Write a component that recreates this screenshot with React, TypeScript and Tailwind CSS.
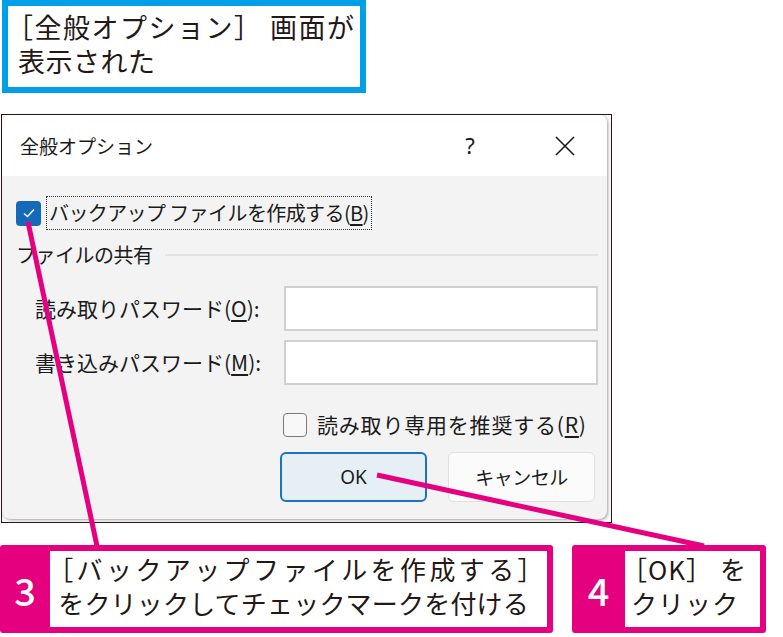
import React from "react";

const jp = { fontFamily: '"Noto Sans CJK JP", "Noto Sans", sans-serif' } as React.CSSProperties;

function U({ c }: { c: string }) {
  return <span className="underline underline-offset-[3px] decoration-[1.5px]">{c}</span>;
}

function OB({ m }: { m: string }) {
  return <span className={m}>［</span>;
}

export default function App() {
  return (
    <div
      className="relative w-[783px] h-[637px] bg-white overflow-hidden text-[#231815]"
      style={jp}
    >
      {/* top callout */}
      <div className="ml-[2px] w-[364px] h-[93px] border-[6px] border-[#00a0e9] pl-[10px] pt-[4px] text-[27px] leading-[34px]">
        <div className="tracking-[1.5px]"><OB m="ml-[-12px]" />全般オプション］ 画面が</div>
        <div className="tracking-[0.5px]">表示された</div>
      </div>

      {/* dialog screenshot */}
      <div className="mt-[21px] ml-[1px] w-[611px] h-[409px] border border-[#231815] bg-[#fafafa] flex">
        <div className="flex-1 mr-[4px] mb-[3px] rounded-[8px] overflow-hidden bg-[#f3f3f3] shadow-[1px_1px_3px_rgba(0,0,0,0.35)] flex flex-col text-[#1b1b1b]">
          {/* title bar */}
          <div className="h-[61px] bg-white flex items-center pl-[18px] text-[19px]">
            <div className="flex-1 pt-[2px]">全般オプション</div>
            <div className="w-[40px] text-center text-[22px] mr-[55px]" style={{ fontFamily: '"Noto Sans", sans-serif' }}>?</div>
            <div className="w-[40px] flex justify-center mr-[22px]">
              <svg width="22" height="22" viewBox="0 0 22 22">
                <path d="M2 2 L20 20 M20 2 L2 20" stroke="#1b1b1b" strokeWidth="1.6" fill="none" />
              </svg>
            </div>
          </div>
          {/* body */}
          <div className="flex-1 flex flex-col pt-[20px] pl-[14px] pr-[9px] text-[20px]">
            <div className="h-[34px] flex items-center">
              <div className="w-[25px] h-[25px] rounded-[4px] bg-[#1469b9] flex items-center justify-center">
                <svg width="14" height="12" viewBox="0 0 14 12">
                  <path d="M2 6.5 L5.5 9.5 L12 2.5" stroke="white" strokeWidth="1.4" fill="none" />
                </svg>
              </div>
              <div className="ml-[5px] h-[34px] flex items-center px-[2px] border border-dotted border-[#333] tracking-[-0.6px]">
                バックアップ ファイルを作成する(<U c="B" />)
              </div>
            </div>
            <div className="mt-[13px] h-[24px] flex items-center">
              <span className="tracking-[-0.5px]">ファイルの共有</span>
              <div className="flex-1 ml-[12px] h-[2px] bg-[#e4e4e4]" />
            </div>
            <div className="mt-[19px] flex items-center text-[21px]">
              <div className="flex-1 pl-[19px]">
                読み取りパスワード(<U c="O" />):
              </div>
              <div className="w-[314px] h-[45px] bg-white border-2 border-[#d0d0d0]" />
            </div>
            <div className="mt-[9px] flex items-center text-[21px]">
              <div className="flex-1 pl-[19px]">
                書き込みパスワード(<U c="M" />):
              </div>
              <div className="w-[314px] h-[45px] bg-white border-2 border-[#d0d0d0]" />
            </div>
            <div className="mt-[28px] flex items-center pl-[267px] h-[24px] text-[21px]">
              <div className="w-[24px] h-[24px] rounded-[4px] border-[1.5px] border-[#7a7a7a] bg-[#f8f8f8]" />
              <div className="ml-[10px] tracking-[0.8px]">
                読み取り専用を推奨する(<U c="R" />)
              </div>
            </div>
            <div className="mt-[15px] flex justify-end gap-[21px] pr-[3px] text-[19px]">
              <div className="w-[147px] h-[50px] rounded-[6px] border-2 border-[#1a73c5] bg-[#e6eef6] flex items-center justify-center" style={{ fontFamily: '"Noto Sans", sans-serif' }}>
                OK
              </div>
              <div className="w-[147px] h-[50px] rounded-[6px] border border-[#e0e0e0] bg-[#fbfbfb] flex items-center justify-center tracking-[-0.5px]">
                キャンセル
              </div>
            </div>
          </div>
        </div>
      </div>

      {/* bottom callouts */}
      <div className="mt-[22px] flex h-[88px]">
        <div className="w-[553px] h-full bg-[#e4007f] rounded-[3px] flex items-stretch p-[6px] pl-0">
          <div className="w-[57px] flex items-center justify-center text-white text-[38px] font-medium">3</div>
          <div className="flex-1 bg-white pl-[8px] pt-[1px] text-[26px] leading-[34px] whitespace-nowrap">
            <div className="tracking-[3.4px]"><OB m="ml-[-11px]" />バックアップファイルを作成する］</div>
            <div className="tracking-[0.2px]">をクリックしてチェックマークを付ける</div>
          </div>
        </div>
        <div className="ml-[19px] w-[194px] h-full bg-[#e4007f] rounded-[3px] flex items-stretch p-[6px] pl-0">
          <div className="w-[53px] flex items-center justify-center text-white text-[38px] font-medium">4</div>
          <div className="flex-1 bg-white pl-[6px] pt-[1px] text-[26px] leading-[34px] whitespace-nowrap">
            <div className="tracking-[1px]"><OB m="ml-[-10px]" />OK］ を</div>
            <div className="tracking-[1px]">クリック</div>
          </div>
        </div>
      </div>

      {/* leader lines */}
      <svg className="absolute inset-0 pointer-events-none" width="783" height="637">
        <line x1="28" y1="222" x2="97" y2="546" stroke="#e4007f" strokeWidth="5" />
        <line x1="377" y1="475" x2="704" y2="546" stroke="#e4007f" strokeWidth="5" />
      </svg>
    </div>
  );
}
